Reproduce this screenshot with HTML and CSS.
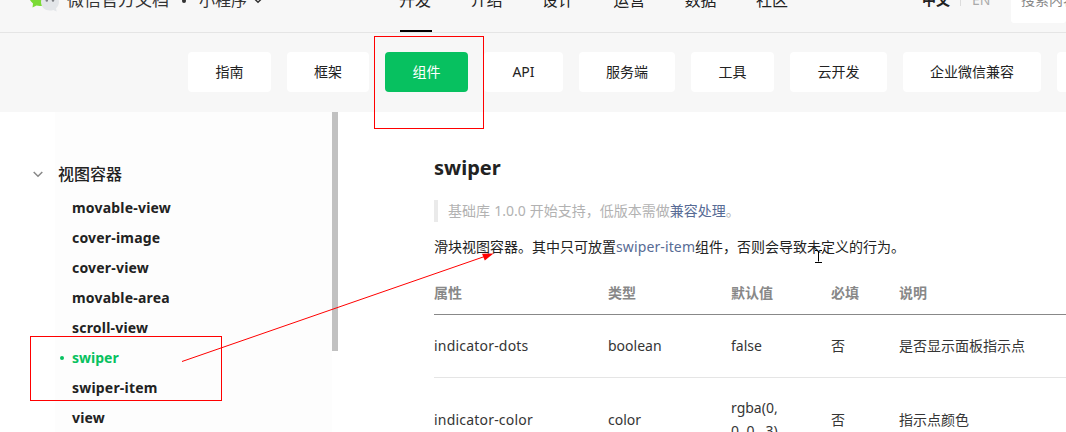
FILE: index.html
```html
<!DOCTYPE html>
<html lang="zh-CN">
<head>
<meta charset="utf-8">
<title>swiper | 微信官方文档</title>
<link rel="stylesheet" href="styles.css">
</head>
<body>
<header class="header">
  <div class="brand">
    <svg class="logo" width="32" height="28" viewBox="0 0 32 28">
      <path d="M1 11C1 5 6 1 12 1s11 4 11 10-5 10-11 10c-1.500 0-2.500-.2-3.500-.5L4.500 22.500l.5-4C2.500 16.500 1 14 1 11z" fill="#7bdb35"/>
      <path d="M13 17c0-5 4-8.500 9-8.500s9 3.500 9 8.500c0 2.500-1.200 4.700-3 6.200l.7 3.300-3.400-1.600c-1 .4-2.100.6-3.300.6-5 0-9-3.500-9-8.500z" fill="#e3e6e9"/>
      <circle cx="18.800" cy="15.500" r="1.200" fill="#7c7f82"/><circle cx="25" cy="15.500" r="1.200" fill="#7c7f82"/>
    </svg>
    <span class="brand-name">微信官方文档</span>
    <span class="brand-dot"></span>
    <span class="product">小程序</span>
    <svg class="caret" width="8" height="6" viewBox="0 0 8 6"><path d="M.7 1l3.300 3.300L7.300 1" fill="none" stroke="#333" stroke-width="1.500"/></svg>
  </div>
  <nav class="nav">
    <a class="nav-item active"><span>开发</span></a><a class="nav-item"><span>介绍</span></a><a class="nav-item"><span>设计</span></a><a class="nav-item"><span>运营</span></a><a class="nav-item"><span>数据</span></a><a class="nav-item"><span>社区</span></a>
  </nav>
  <div class="lang"><b>中文</b><i class="sep"></i><span class="en">EN</span></div>
  <div class="search">搜索内容</div>
</header>
<nav class="tabs">
  <a class="tab">指南</a>
  <a class="tab tab-narrow">框架</a>
  <a class="tab tab-active">组件</a>
  <a class="tab tab-api">API</a>
  <a class="tab tab-server">服务端</a>
  <a class="tab">工具</a>
  <a class="tab tab-cloud">云开发</a>
  <a class="tab tab-work">企业微信兼容</a>
  <a class="tab tab-last"></a>
</nav>
<div class="main">
  <aside class="sidebar">
    <div class="group">
      <svg width="10" height="7" viewBox="0 0 10 7"><path d="M.7 1L5 5.300 9.300 1" fill="none" stroke="#888" stroke-width="1.500"/></svg>
      <span>视图容器</span>
    </div>
    <ul class="menu">
      <li>movable-view</li>
      <li>cover-image</li>
      <li>cover-view</li>
      <li>movable-area</li>
      <li>scroll-view</li>
      <li class="current">swiper</li>
      <li>swiper-item</li>
      <li>view</li>
    </ul>
  </aside>
  <div class="scroll"></div>
  <article class="content">
    <h1>swiper</h1>
    <blockquote>基础库 1.0.0 开始支持，低版本需做<a class="link">兼容处理</a>。</blockquote>
    <p class="desc">滑块视图容器。其中只可放置<a class="link item-link">swiper-item</a>组件，否则会导致未定义的行为。</p>
    <div class="row head"><span>属性</span><span>类型</span><span>默认值</span><span>必填</span><span>说明</span></div>
    <div class="row first"><span class="prop">indicator-dots</span><span>boolean</span><span>false</span><span>否</span><span>是否显示面板指示点</span></div>
    <div class="row second"><span class="prop">indicator-color</span><span>color</span><span>rgba(0,<br>0, 0, .3)</span><span>否</span><span>指示点颜色</span></div>
  </article>
</div>
<svg class="marks" width="1066" height="432" viewBox="0 0 1066 432">
  <g fill="none" stroke="#f00">
    <rect x="374.500" y="36.500" width="109" height="92"/>
    <rect x="30.500" y="336.500" width="191" height="64"/>
    <path d="M182 361.500L486 256"/>
  </g>
  <path d="M493.500 253.500l-11.500.2 2.800 6.800z" fill="#f00"/>
  <path d="M815 250.500h2.500l1 1 1-1h2.500M818.500 251.500v10M815 262.500h7" fill="none" stroke="#000"/>
</svg>
</body>
</html>
```
FILE: styles.css
```css
* { box-sizing: border-box; }
body {
  margin: 0;
  width: 1066px;
  height: 432px;
  overflow: hidden;
  background: #fff;
  color: #222;
  font: 14px/20px "Noto Sans", "Noto Sans CJK SC", sans-serif;
}
.header {
  display: flex;
  align-items: center;
  height: 65px;
  margin-top: -32px;
  padding-left: 28px;
  overflow: hidden;
  background: #f7f7f7;
  border-bottom: 1px solid #e5e5e5;
}
.brand { display: flex; align-items: center; flex: none; width: 372px; font-size: 17px; color: #333; }
.logo { margin-top: -2px; }
.brand-name { margin-left: 7px; }
.brand-dot { width: 4px; height: 4px; margin: 2px 13px 0; border-radius: 50%; background: #333; }
.product { font-size: 16px; }
.caret { margin: 2px 0 0 7px; }
.nav { display: flex; flex: none; gap: 39.400px; height: 64px; width: 522px; font-size: 16px; line-height: 65px; }
.nav-item { width: 32px; white-space: nowrap; }
.nav-item span { margin-left: -1px; }
.nav-item.active { height: 64px; border-bottom: 2px solid #000; }
.lang { display: flex; flex: none; align-items: center; width: 89px; }
.sep { width: 1px; height: 12px; margin: 0 11px 0 10px; background: #ddd; }
.en { color: #aaa; }
.search { flex: none; width: 55px; height: 46px; padding-left: 10px; overflow: hidden; background: #fff; border-radius: 3px; line-height: 46px; color: #888; white-space: nowrap; }
.tabs {
  display: flex;
  gap: 16px;
  height: 79px;
  padding: 19px 0 0 188px;
  background: #f7f7f7;
}
.tab { flex: none; width: 83px; height: 40px; border-radius: 4px; background: #fff; line-height: 40px; text-align: center; }
.tab-narrow { width: 82px; }
.tab-api { width: 79px; }
.tab-server { width: 96px; }
.tab-cloud { width: 97px; }
.tab-work { width: 138px; }
.tab-last { width: 9px; border-radius: 4px 0 0 4px; }
.tab-active { background: #07c160; color: #fff; }
.main { display: flex; height: 320px; overflow: hidden; }
.sidebar { width: 332px; padding-top: 49px; background: linear-gradient(90deg, #fff 55px, #fdfdfd 55px); }
.group { display: flex; align-items: center; gap: 15px; height: 25px; padding-left: 33px; font-size: 16px; font-weight: 500; }
.group svg { margin-top: 2px; }
.menu { margin: 7px 0 0; padding: 0; list-style: none; font-weight: 700; line-height: 30px; letter-spacing: .2px; }
.menu li { padding-left: 72px; }
.menu .current { display: flex; align-items: center; gap: 10px; padding-left: 60px; color: #07c160; letter-spacing: 0; }
.current::before { content: ""; width: 4px; height: 4px; margin-right: -2px; border-radius: 50%; background: #07c160; }
.scroll { width: 6px; height: 239px; background: #c1c1c1; }
.content { width: 728px; padding: 41px 0 0 96px; }
h1 { margin: 0; font-size: 20px; line-height: 30px; }
blockquote { height: 22px; margin: 17px 0 0; padding-left: 10px; border-left: 4px solid #eaeaea; color: #b2b2b2; line-height: 22px; word-spacing: .5px; }
.link { color: #576b95; }
.item-link { letter-spacing: .12px; }
.desc { margin: 15px 0 0; line-height: 20px; white-space: nowrap; }
.row { display: grid; grid-template-columns: 174px 123px 100px 68px 1fr; align-items: center; line-height: 23px; color: #353535; white-space: nowrap; }
.head { height: 43px; margin-top: 15px; padding-bottom: 2px; border-bottom: 1px solid #888; color: #888; font-weight: 700; }
.first { height: 63px; padding-bottom: 2px; border-bottom: 1px solid #e5e5e5; }
.second { height: 82px; }
.prop { letter-spacing: .2px; }
.marks { position: absolute; left: 0; top: 0; }
```
